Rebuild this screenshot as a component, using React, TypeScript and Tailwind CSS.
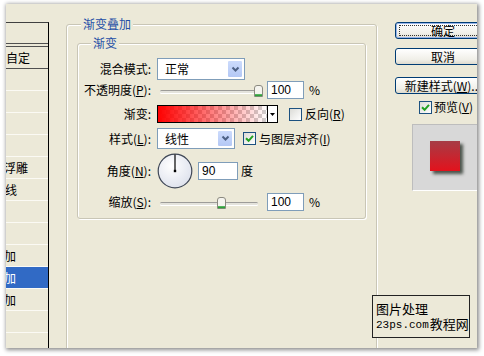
import type { ReactNode } from "react";

type ListItem = {
  text: string;
  offset: string;
  selected?: boolean;
};

// the style list is scrolled: only the tail of each name is visible
const listItems: ListItem[] = [
  { text: "投影", offset: "ml-[-38px]" },
  { text: "内阴影", offset: "ml-[-38px]" },
  { text: "外发光", offset: "ml-[-38px]" },
  { text: "内发光", offset: "ml-[-38px]" },
  { text: "斜面和浮雕", offset: "ml-[-38px]" },
  { text: "等高线", offset: "ml-[-25px]" },
  { text: "纹理", offset: "ml-[-25px]" },
  { text: "光泽", offset: "ml-[-38px]" },
  { text: "颜色叠加", offset: "ml-[-38px]" },
  { text: "渐变叠加", offset: "ml-[-38px]", selected: true },
  { text: "图案叠加", offset: "ml-[-38px]" },
  { text: "描边", offset: "ml-[-38px]" },
  { text: "", offset: "" },
];

function Row({ label, className, children }: { label: ReactNode; className: string; children: ReactNode }) {
  return (
    <div className={`flex items-center ${className}`}>
      <div className="w-[73px] shrink-0 text-right">{label}</div>
      <div className="ml-[6px] flex h-full items-center">{children}</div>
    </div>
  );
}

function Checkbox({ checked }: { checked?: boolean }) {
  return (
    <span className="flex h-[13px] w-[13px] shrink-0 items-center justify-center border border-[#1c5180] bg-[linear-gradient(135deg,#dcdcd7,#ffffff)]">
      {checked && (
        <svg width="9" height="9" viewBox="0 0 9 9">
          <path d="M1 4.2 L3.6 6.8 L8 1.8" stroke="#21a121" strokeWidth="2" fill="none" />
        </svg>
      )}
    </span>
  );
}

function Combo({ value, className }: { value: string; className: string }) {
  return (
    <div className={`flex h-full items-center border border-[#7f9db9] bg-white ${className}`}>
      <span className="pl-[7px]">{value}</span>
      <span className="ml-auto mr-px flex h-[calc(100%-2px)] w-[16px] items-center justify-center rounded-[2px] border border-white bg-[linear-gradient(#ccdbfc,#b4c8f5)]">
        <svg width="9" height="7" viewBox="0 0 9 7">
          <path d="M1.5 1.5 L4.5 4.5 L7.5 1.5" stroke="#4d6185" strokeWidth="2" fill="none" />
        </svg>
      </span>
    </div>
  );
}

function Slider({ pos }: { pos: number }) {
  return (
    <div className="relative flex h-full w-[106px] items-center">
      <div className="ml-[3px] mt-[3px] h-[3px] w-[98px] rounded-full border-t border-[#9d9c99] bg-[#e4e3dc] shadow-[0_1px_0_#ffffff]" />
      <svg className="absolute top-[4px]" style={{ left: pos }} width="9" height="12" viewBox="0 0 9 12">
        <path d="M0.5 3 Q0.5 0.5 3 0.5 H6 Q8.5 0.5 8.5 3 V11.5 H0.5 Z" fill="#f5f4ef" stroke="#8b8a80" />
        <path d="M1 10.2 H8" stroke="#2fa23a" strokeWidth="2" />
      </svg>
    </div>
  );
}

function NumberBox({ value, className }: { value: string; className: string }) {
  return (
    <div className={`flex h-[18px] items-center border border-[#7f9db9] bg-white pl-[3px] font-['Liberation_Sans',sans-serif] text-[12px] ${className}`}>
      {value}
    </div>
  );
}

function Button({ children, primary }: { children: ReactNode; primary?: boolean }) {
  return (
    <div
      className={`flex h-[17px] w-[96px] items-center justify-center rounded-[3px] border border-[#003c74] bg-[linear-gradient(#ffffff,#f0efe8_70%,#dedbcf)] ${primary ? "shadow-[inset_0_0_0_1px_#97b4ea]" : ""}`}
    >
      {primary ? (
        <span className="flex h-[11px] w-[88px] items-center justify-center border border-dotted border-[#333]">{children}</span>
      ) : (
        <span className="whitespace-nowrap">{children}</span>
      )}
    </div>
  );
}

export default function App() {
  return (
    <div className="h-[356px] w-[484px] overflow-hidden bg-white pl-[6px] pt-[4px] font-['Noto_Sans_CJK_SC','Noto_Sans',sans-serif] text-[12px] leading-[14px] text-black">
      <div className="relative flex h-[344px] w-[471px] overflow-hidden bg-[#ece9d8] shadow-[1px_1px_4px_1px_rgba(0,0,0,0.45)]">
        {/* style list */}
        <div className="mt-[18px] flex w-[43px] shrink-0 flex-col overflow-hidden border-r border-t border-r-black border-t-[#404040]">
          <div className="h-[20px] shrink-0" />
          <div className="h-[4px] shrink-0 border-y border-[#505050]" />
          <div className="flex h-[22px] shrink-0 items-center border-b border-[#505050]">
            <span className="ml-[-60px] whitespace-nowrap">混合选项：自定</span>
          </div>
          {listItems.map((item, i) => (
            <div
              key={i}
              className={`flex h-[22px] shrink-0 items-center border-b border-[#fbfaf4] ${item.selected ? "bg-[#316ac5] text-white" : ""}`}
            >
              <span className={`whitespace-nowrap ${item.offset}`}>{item.text}</span>
            </div>
          ))}
        </div>

        {/* outer group */}
        <div className="relative ml-[17px] mt-[20px] h-[340px] w-[311px] shrink-0 rounded-[3px] border border-[#c9c6b6] pl-[10px] pt-[18px] shadow-[1px_1px_0_#ffffff,inset_1px_1px_0_#ffffff]">
          <span className="absolute left-[14px] top-[-8px] bg-[#ece9d8] px-[2px] text-[#1f4fa6]">渐变叠加</span>

          {/* inner group */}
          <div className="relative h-[176px] w-[289px] rounded-[3px] border border-[#c9c6b6] pt-[14px] shadow-[1px_1px_0_#ffffff,inset_1px_1px_0_#ffffff]">
            <span className="absolute left-[13px] top-[-8px] bg-[#ece9d8] px-[2px] text-[#1f4fa6]">渐变</span>

            <Row label="混合模式:" className="h-[22px]">
              <Combo value="正常" className="w-[88px]" />
            </Row>

            <Row
              label={
                <>
                  不透明度(<u>P</u>):
                </>
              }
              className="mt-px h-[18px]"
            >
              <Slider pos={97} />
              <NumberBox value="100" className="ml-[4px] w-[37px]" />
              <span className="ml-[5px]">%</span>
            </Row>

            <Row label="渐变:" className="mt-[6px] h-[18px]">
              <div className="flex h-[18px] w-[121px] border border-black">
                <div className="h-full flex-1 bg-[image:linear-gradient(to_right,#ff0000,rgba(255,0,0,0.55)_45%,rgba(255,0,0,0)),repeating-conic-gradient(#cfcfcf_0_25%,#ffffff_0_50%)] bg-[length:100%_100%,8px_8px]" />
                <div className="flex w-[10px] items-center justify-center border-l border-black bg-white">
                  <svg width="5" height="3" viewBox="0 0 5 3">
                    <path d="M0 0 H5 L2.5 3 Z" fill="#000" />
                  </svg>
                </div>
              </div>
              <span className="ml-[11px]">
                <Checkbox />
              </span>
              <span className="ml-[3px]">
                反向(<u>R</u>)
              </span>
            </Row>

            <Row
              label={
                <>
                  样式(<u>L</u>):
                </>
              }
              className="mt-[5px] h-[21px]"
            >
              <Combo value="线性" className="w-[78px]" />
              <span className="ml-[8px]">
                <Checkbox checked />
              </span>
              <span className="ml-[3px]">
                与图层对齐(<u>I</u>)
              </span>
            </Row>

            <Row
              label={
                <>
                  角度(<u>N</u>):
                </>
              }
              className="mt-[4px] h-[36px]"
            >
              <svg width="36" height="36" viewBox="0 0 36 36">
                <defs>
                  <radialGradient id="dial" cx="40%" cy="35%" r="70%">
                    <stop offset="0%" stopColor="#ffffff" />
                    <stop offset="100%" stopColor="#dde1ec" />
                  </radialGradient>
                </defs>
                <circle cx="18" cy="18" r="16.8" fill="url(#dial)" stroke="#3f4756" strokeWidth="1.2" />
                <line x1="18" y1="18" x2="18" y2="1.5" stroke="#000" strokeWidth="1.2" />
                <rect x="16.8" y="16.8" width="2.4" height="2.4" fill="#000" />
              </svg>
              <NumberBox value="90" className="ml-[5px] w-[40px]" />
              <span className="ml-[3px]">度</span>
            </Row>

            <Row
              label={
                <>
                  缩放(<u>S</u>):
                </>
              }
              className="mt-[4px] h-[17px]"
            >
              <Slider pos={60} />
              <NumberBox value="100" className="ml-[4px] w-[37px]" />
              <span className="ml-[5px]">%</span>
            </Row>
          </div>
        </div>

        {/* buttons */}
        <div className="ml-[18px] mt-[18px] flex w-[96px] shrink-0 flex-col">
          <Button primary>确定</Button>
          <div className="mt-[9px]">
            <Button>取消</Button>
          </div>
          <div className="mt-[12px]">
            <Button>
              新建样式(<u>W</u>)...
            </Button>
          </div>
          <div className="mt-[6px] flex items-center pl-[24px]">
            <Checkbox checked />
            <span className="ml-[2px]">
              预览(<u>V</u>)
            </span>
          </div>
          <div className="ml-[17px] mt-[10px] flex h-[67px] w-[70px] items-center justify-center border border-[#bdbdbd] border-b-white bg-[#d8d8d8] pb-[4px] pr-[5px]">
            <div className="h-[30px] w-[30px] bg-[linear-gradient(#a63c46,#e3121c)] shadow-[3px_3px_3px_rgba(30,40,30,0.75)]" />
          </div>
        </div>

        {/* watermark */}
        <div className="absolute left-[366px] top-[291px] h-[43px] w-[98px] border border-[#222] bg-[#ece9d8] pl-[3px] pt-[6px]">
          <div className="text-[13px] leading-[14px]">图片处理</div>
          <div className="flex items-end">
            <span className="font-['Liberation_Mono',monospace] text-[11px] leading-[12px]">23ps.com</span>
            <span className="ml-[1px] text-[13px] leading-[15px]">教程网</span>
          </div>
        </div>
      </div>
    </div>
  );
}
